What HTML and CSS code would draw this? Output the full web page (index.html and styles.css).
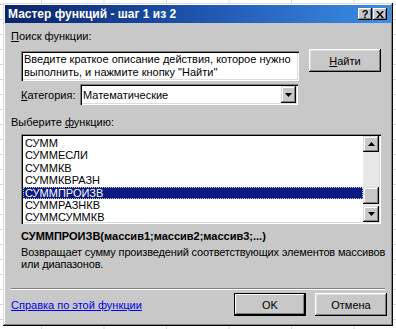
FILE: index.html
```html
<!DOCTYPE html>
<html lang="ru">
<head>
    <meta charset="UTF-8">
    <title>Мастер функций</title>
    <link rel="stylesheet" href="styles.css">
</head>
<body>
    <div class="dialog">
        <div class="titlebar">
            <span class="title">Мастер функций - шаг 1 из 2</span>
            <div class="title-btns">
                <span class="tbtn help">?</span>
                <span class="tbtn close">
                    <svg width="8" height="7" viewBox="0 0 8 7"><path d="M0 0h2l2 2.5L6 0h2L5 3.5 8 7H6L4 4.5 2 7H0l3-3.5z" fill="#000"/></svg>
                </span>
            </div>
        </div>

        <div class="content">
            <div class="label"><u>П</u>оиск функции:</div>
            <div class="search-row">
                <div class="textbox">Введите краткое описание действия, которое нужно выполнить, и нажмите кнопку "Найти"</div>
                <button class="btn find"><u>Н</u>айти</button>
            </div>

            <div class="category-row">
                <span class="cat-label"><u>К</u>атегория:</span>
                <div class="select">
                    <span class="select-value">Математические</span>
                    <span class="drop-btn">
                        <svg width="7" height="4" viewBox="0 0 7 4"><path d="M0 0h7L3.5 4z" fill="#000"/></svg>
                    </span>
                </div>
            </div>

            <div class="label pick">Выберите <u>ф</u>ункцию:</div>
            <div class="listbox">
                <ul class="items">
                    <li>СУММ</li>
                    <li>СУММЕСЛИ</li>
                    <li>СУММКВ</li>
                    <li>СУММКВРАЗН</li>
                    <li class="selected">СУММПРОИЗВ</li>
                    <li>СУММРАЗНКВ</li>
                    <li>СУММСУММКВ</li>
                </ul>
                <div class="scrollbar">
                    <span class="sbtn">
                        <svg width="7" height="4" viewBox="0 0 7 4"><path d="M3.5 0L7 4H0z" fill="#000"/></svg>
                    </span>
                    <div class="track">
                        <span class="thumb"></span>
                    </div>
                    <span class="sbtn">
                        <svg width="7" height="4" viewBox="0 0 7 4"><path d="M0 0h7L3.5 4z" fill="#000"/></svg>
                    </span>
                </div>
            </div>

            <div class="signature">СУММПРОИЗВ(массив1;массив2;массив3;...)</div>
            <div class="description">Возвращает сумму произведений соответствующих элементов массивов<br>или диапазонов.</div>

            <div class="separator"></div>

            <div class="footer">
                <a class="help-link" href="#">Справка по этой функции</a>
                <div class="footer-btns">
                    <button class="btn default">OK</button>
                    <button class="btn">Отмена</button>
                </div>
            </div>
        </div>
    </div>
</body>
</html>
```

FILE: styles.css
```css
body {
    margin: 0;
    padding: 3px;
    width: 396px;
    height: 329px;
    box-sizing: border-box;
    overflow: hidden;
    background-color: #fff;
    background-image:
        linear-gradient(to right, #d8d8d8 1px, transparent 1px),
        linear-gradient(to bottom, #d8d8d8 1px, transparent 1px);
    background-size: 62.5px 15px;
    background-position: 41px 4px;
    font-family: 'Liberation Sans', Arial, sans-serif;
    font-size: 11px;
    color: #000;
}

.dialog {
    width: 390px;
    height: 323px;
    box-sizing: border-box;
    padding: 2px;
    background: #c8c8c8;
    box-shadow: inset -1px -1px 0 #000, inset 1px 1px 0 #dcdcdc,
                inset -2px -2px 0 #808080, inset 2px 2px 0 #fff;
    display: flex;
    flex-direction: column;
}

.titlebar {
    height: 18px;
    display: flex;
    align-items: center;
    justify-content: space-between;
    padding: 0 4px 0 3px;
    background: linear-gradient(to right, #0a246a 0%, #1c4fa8 45%, #3c8ee6 100%);
}

.title {
    color: #fff;
    font-weight: bold;
    font-size: 12px;
}

.title-btns {
    display: flex;
    gap: 1px;
}

.tbtn {
    width: 14px;
    height: 12px;
    display: flex;
    align-items: center;
    justify-content: center;
    background: #c8c8c8;
    box-shadow: inset -1px -1px 0 #000, inset 1px 1px 0 #fff, inset -2px -2px 0 #808080;
    font-weight: bold;
    font-size: 11px;
    line-height: 12px;
}

.content {
    flex: 1;
    padding: 0 4px 0 6px;
    display: flex;
    flex-direction: column;
}

.label {
    margin-top: 6px;
    height: 14px;
    line-height: 14px;
}

.search-row {
    display: flex;
    align-items: flex-start;
    margin-top: 6px;
    padding-left: 10px;
}

.textbox {
    width: 278px;
    height: 30px;
    margin-top: 2px;
    box-sizing: border-box;
    background: #fff;
    padding: 2px 3px;
    line-height: 13px;
    box-shadow: inset 1px 1px 0 #808080, inset 2px 2px 0 #000,
                inset -1px -1px 0 #fff, inset -2px -2px 0 #dcdcdc;
}

.btn {
    width: 72px;
    height: 23px;
    border: none;
    padding: 0;
    background: #c8c8c8;
    font-family: inherit;
    font-size: 11px;
    color: #000;
    box-shadow: inset -1px -1px 0 #000, inset 1px 1px 0 #fff,
                inset -2px -2px 0 #808080, inset 2px 2px 0 #dcdcdc;
}

.find {
    margin-left: 10px;
}

.category-row {
    display: flex;
    align-items: center;
    margin-top: 3px;
    padding-left: 10px;
}

.cat-label {
    width: 59px;
}

.select {
    width: 218px;
    height: 21px;
    box-sizing: border-box;
    background: #fff;
    display: flex;
    align-items: center;
    justify-content: space-between;
    padding: 2px 2px 2px 3px;
    box-shadow: inset 1px 1px 0 #808080, inset 2px 2px 0 #000,
                inset -1px -1px 0 #fff, inset -2px -2px 0 #dcdcdc;
}

.drop-btn {
    width: 15px;
    height: 17px;
    display: flex;
    align-items: center;
    justify-content: center;
    background: #c8c8c8;
    box-shadow: inset -1px -1px 0 #000, inset 1px 1px 0 #dcdcdc,
                inset -2px -2px 0 #808080, inset 2px 2px 0 #fff;
}

.pick {
    margin-top: 10px;
}

.listbox {
    margin: 5px 0 0 10px;
    width: 360px;
    height: 90px;
    box-sizing: border-box;
    padding: 2px;
    background: #fff;
    display: flex;
    box-shadow: inset 1px 1px 0 #808080, inset 2px 2px 0 #000,
                inset -1px -1px 0 #fff, inset -2px -2px 0 #dcdcdc;
}

.items {
    flex: 1;
    list-style: none;
    margin: 0;
    padding: 1px 0 0;
    overflow: hidden;
}

.items li {
    height: 12.4px;
    line-height: 12.4px;
    padding-left: 2px;
}

.items .selected {
    background: #0a1a80;
    color: #fff;
    outline: 1px dotted #c8c8c8;
    outline-offset: -1px;
}

.scrollbar {
    width: 16px;
    display: flex;
    flex-direction: column;
}

.sbtn {
    height: 16px;
    display: flex;
    align-items: center;
    justify-content: center;
    background: #c8c8c8;
    box-shadow: inset -1px -1px 0 #000, inset 1px 1px 0 #dcdcdc,
                inset -2px -2px 0 #808080, inset 2px 2px 0 #fff;
}

.track {
    flex: 1;
    display: flex;
    flex-direction: column;
    justify-content: flex-end;
    padding-bottom: 2px;
    background: #e8e8e8;
}

.thumb {
    height: 17px;
    background: #c8c8c8;
    box-shadow: inset -1px -1px 0 #000, inset 1px 1px 0 #dcdcdc,
                inset -2px -2px 0 #808080, inset 2px 2px 0 #fff;
}

.signature {
    margin: 5px 0 0 10px;
    font-weight: bold;
    font-size: 11px;
    line-height: 14px;
}

.description {
    margin: 3px 0 0 10px;
    line-height: 12px;
    white-space: nowrap;
    letter-spacing: -0.15px;
}

.separator {
    margin: 18px 0 0 0;
    width: 374px;
    height: 0;
    border-top: 1px solid #808080;
    border-bottom: 1px solid #fff;
}

.footer {
    display: flex;
    align-items: center;
    justify-content: space-between;
    margin-top: 3px;
}

.help-link {
    color: #0000ee;
    text-decoration: underline;
}

.footer-btns {
    display: flex;
    gap: 9px;
}

.default {
    box-shadow: inset 0 0 0 1px #000, inset -2px -2px 0 #000, inset 2px 2px 0 #fff,
                inset -3px -3px 0 #808080;
}
```
